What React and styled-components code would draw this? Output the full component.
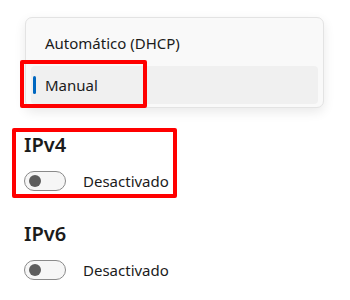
import React from "react";
import styled, { createGlobalStyle } from "styled-components";

const Global = createGlobalStyle`
  html, body { margin: 0; padding: 0; background: #ffffff; }
  body { font-family: "Noto Sans", "Open Sans", sans-serif; color: #1b1b1b; }
`;

const Page = styled.div`
  width: 350px;
  height: 300px;
  overflow: hidden;
  padding: 17px 0 0 24px;
  box-sizing: border-box;
  position: relative;
`;

const Menu = styled.div`
  width: 299px;
  margin-left: 1px;
  box-sizing: border-box;
  background: #f9f9f9;
  border: 1px solid #e3e3e3;
  border-radius: 7px;
  box-shadow: 0 4px 12px rgba(0, 0, 0, 0.09);
  padding: 6px 5px 3px 5px;
  display: flex;
  flex-direction: column;
  gap: 4px;
`;

const Item = styled.div`
  position: relative;
  height: 38px;
  display: flex;
  align-items: center;
  padding-left: 14px;
  border-radius: 4px;
  font-size: 15px;
  background: ${(p) => (p.$selected ? "#f0f0f0" : "transparent")};
`;

const Indicator = styled.span`
  position: absolute;
  left: 2px;
  top: 10px;
  width: 3px;
  height: 18px;
  border-radius: 2px;
  background: #0067c0;
`;

const Highlight = styled.div`
  position: absolute;
  border: 4px solid #ff0000;
  border-radius: 2px;
  box-sizing: border-box;
  pointer-events: none;
  left: ${(p) => p.$l}px;
  top: ${(p) => p.$t}px;
  width: ${(p) => p.$w}px;
  height: ${(p) => p.$h}px;
`;

const Section = styled.section`
  position: relative;
  margin-top: ${(p) => p.$mt}px;
`;

const Title = styled.h2`
  margin: 0;
  font-size: 20px;
  font-weight: 600;
  line-height: 28px;
`;

const ToggleRow = styled.div`
  display: flex;
  align-items: center;
  gap: 17px;
  margin-top: 12px;
  font-size: 15px;
`;

const Toggle = styled.span`
  width: 42px;
  height: 20px;
  box-sizing: border-box;
  border: 1px solid #8a8a8a;
  border-radius: 10px;
  background: #f6f6f6;
  display: flex;
  align-items: center;
  padding-left: 4px;
`;

const Knob = styled.span`
  width: 12px;
  height: 12px;
  border-radius: 50%;
  background: #5d5d5d;
`;

function ToggleSetting({ title, state, mt, highlighted }) {
  return (
    <Section $mt={mt}>
      {highlighted && <Highlight $l={-12} $t={-3} $w={165} $h={70} />}
      <Title>{title}</Title>
      <ToggleRow>
        <Toggle>
          <Knob />
        </Toggle>
        <span>{state}</span>
      </ToggleRow>
    </Section>
  );
}

export default function App() {
  return (
    <>
      <Global />
      <Page>
        <Menu>
          <Item>Automático (DHCP)</Item>
          <Item $selected>
            <Indicator />
            Manual
            <Highlight $l={-11} $t={-6} $w={127} $h={48} />
          </Item>
        </Menu>
        <ToggleSetting title="IPv4" state="Desactivado" mt={23} highlighted />
        <ToggleSetting title="IPv6" state="Desactivado" mt={29} />
      </Page>
    </>
  );
}
